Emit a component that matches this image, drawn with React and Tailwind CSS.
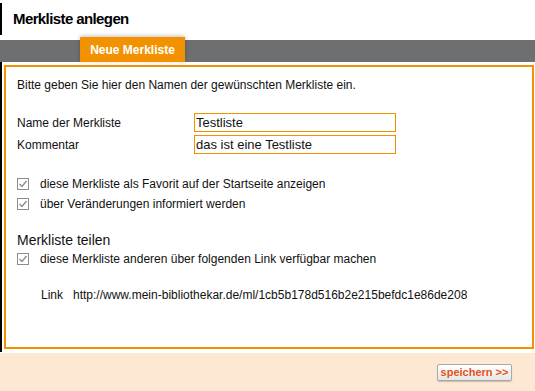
const link = 'http://www.mein-bibliothekar.de/ml/1cb5b178d516b2e215befdc1e86de208';

function Check() {
  return (
    <svg width="12" height="12" viewBox="0 0 12 12" className="shrink-0">
      <rect x="0.5" y="0.5" width="11" height="11" fill="#fff" stroke="#8c8c8c" />
      <path d="M2.5 6 L5 8.5 L9.5 3" fill="none" stroke="#8c8c8c" strokeWidth="1.4" />
    </svg>
  );
}

function CheckRow({ label }) {
  return (
    <label className="flex items-center h-[20px] gap-[11px]">
      <Check />
      <span>{label}</span>
    </label>
  );
}

export default function App() {
  return (
    <div className="w-[535px] h-[391px] bg-white text-[#111] text-[12px] font-['Liberation_Sans',Arial,sans-serif] overflow-hidden">
      {/* Titel */}
      <div className="pt-[3px] h-[40px]">
        <h1 className="h-[32px] border-l-2 border-black pl-[11px] text-[15px] tracking-[-0.6px] font-bold leading-[32px] text-black">
          Merkliste anlegen
        </h1>
      </div>

      {/* Tab-Leiste */}
      <div className="relative h-[22px] bg-[#6e6f71]">
        <div className="absolute left-[80px] top-[-3px] w-[105px] h-[25px] bg-[#f39200] shadow-[0_-1px_4px_rgba(0,0,0,0.25)] text-white font-bold text-[12px] flex items-center justify-center">
          Neue Merkliste
        </div>
      </div>

      {/* Formular */}
      <div className="border-l-2 border-black pl-[2px] pr-[1px] pt-[3px] h-[290px]">
        <div className="h-[284px] border-2 border-[#f39200] px-[11px] pt-[10px]">
          <p className="leading-[16px]">Bitte geben Sie hier den Namen der gewünschten Merkliste ein.</p>

          <div className="mt-[20px] flex flex-col gap-[3px]">
            <div className="flex items-center">
              <span className="w-[177px]">Name der Merkliste</span>
              <div className="w-[202px] h-[19px] border border-[#f39200] text-[13px] leading-[17px] pl-[1px]">Testliste</div>
            </div>
            <div className="flex items-center">
              <span className="w-[177px]">Kommentar</span>
              <div className="w-[202px] h-[19px] border border-[#f39200] text-[13px] leading-[17px] pl-[1px]">das ist eine Testliste</div>
            </div>
          </div>

          <div className="mt-[20px]">
            <CheckRow label="diese Merkliste als Favorit auf der Startseite anzeigen" />
            <CheckRow label="über Veränderungen informiert werden" />
          </div>

          <h2 className="mt-[17px] text-[14px] leading-[18px]">Merkliste teilen</h2>
          <CheckRow label="diese Merkliste anderen über folgenden Link verfügbar machen" />

          <div className="mt-[18px] pl-[24px] flex gap-[10px] leading-[16px]">
            <span>Link</span>
            <span>{link}</span>
          </div>
        </div>
      </div>

      {/* Fußleiste */}
      <div className="mt-[1px] h-[40px] bg-[#fde9d3] flex justify-end pr-[23px] pt-[11px]">
        <button className="h-[17px] w-[75px] border border-[#a9a9a9] rounded-[2px] bg-gradient-to-b from-white to-[#e6e6e6] text-[#e4531b] font-bold text-[11px] leading-[15px] shadow-[0_1px_1px_rgba(0,0,0,0.2)]">
          speichern &gt;&gt;
        </button>
      </div>
    </div>
  );
}
